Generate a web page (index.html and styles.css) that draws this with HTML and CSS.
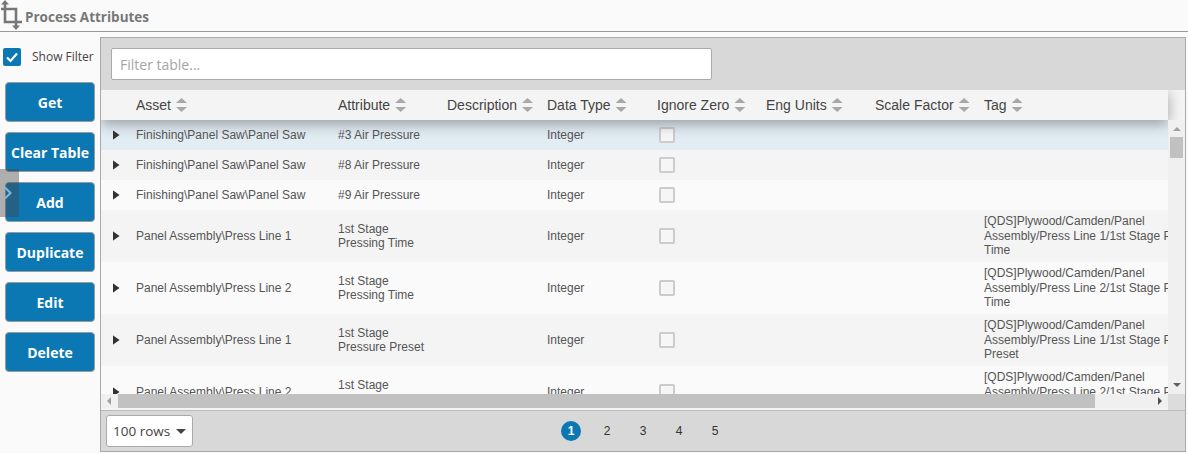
FILE: index.html
```html
<!DOCTYPE html>
<html lang="en">
<head>
<meta charset="utf-8">
<title>Process Attributes</title>
<link rel="stylesheet" href="styles.css">
</head>
<body>
<header class="topbar">
  <svg class="crop-icon" width="24" height="30" viewBox="0 0 24 30" aria-hidden="true">
    <path d="M5 3V22H22M1 9H16V27" fill="none" stroke="#777" stroke-width="2.600"/>
    <path d="M5 0L1 4.500H9ZM16 30L12 25.500H20Z" fill="#777"/>
  </svg>
  <h1 class="title">Process Attributes</h1>
</header>
<div class="page">
  <aside class="side">
    <label class="show-filter">
      <span class="check"><svg width="18" height="18" viewBox="0 0 18 18" aria-hidden="true"><path d="M4 9.500L7.500 13L14 5.500" fill="none" stroke="#fff" stroke-width="2.200"/></svg></span>
      <span>Show Filter</span>
    </label>
    <button class="btn">Get</button>
    <button class="btn">Clear Table</button>
    <button class="btn">Add</button>
    <button class="btn">Duplicate</button>
    <button class="btn">Edit</button>
    <button class="btn">Delete</button>
    <div class="drawer-tab"><svg width="8" height="14" viewBox="0 0 8 14" aria-hidden="true"><path d="M1 1.500L6.500 7L1 12.500" fill="none" stroke="#7db9dc" stroke-width="2"/></svg></div>
  </aside>
  <main class="panel">
    <div class="filter-bar"><input class="filter-input" type="text" placeholder="Filter table..."></div>
    <div class="head-wrap">
      <div class="head grid">
        <span></span>
        <span class="th">Asset<i class="sort"></i></span>
        <span class="th">Attribute<i class="sort"></i></span>
        <span class="th">Description<i class="sort"></i></span>
        <span class="th">Data Type<i class="sort"></i></span>
        <span class="th">Ignore Zero<i class="sort"></i></span>
        <span class="th">Eng Units<i class="sort"></i></span>
        <span class="th">Scale Factor<i class="sort"></i></span>
        <span class="th">Tag<i class="sort"></i></span>
      </div>
    </div>
    <div class="body-wrap">
      <div class="rows">
        <div class="row grid selected"><i class="tri"></i><span>Finishing\Panel Saw\Panel Saw</span><span>#3 Air Pressure</span><span></span><span>Integer</span><i class="box"></i><span></span><span></span><span></span></div>
        <div class="row grid alt"><i class="tri"></i><span>Finishing\Panel Saw\Panel Saw</span><span>#8 Air Pressure</span><span></span><span>Integer</span><i class="box"></i><span></span><span></span><span></span></div>
        <div class="row grid"><i class="tri"></i><span>Finishing\Panel Saw\Panel Saw</span><span>#9 Air Pressure</span><span></span><span>Integer</span><i class="box"></i><span></span><span></span><span></span></div>
        <div class="row grid tall alt"><i class="tri"></i><span>Panel Assembly\Press Line 1</span><span>1st Stage<br>Pressing Time</span><span></span><span>Integer</span><i class="box"></i><span></span><span></span><span>[QDS]Plywood/Camden/Panel<br>Assembly/Press Line 1/1st Stage Pressing<br>Time</span></div>
        <div class="row grid tall"><i class="tri"></i><span>Panel Assembly\Press Line 2</span><span>1st Stage<br>Pressing Time</span><span></span><span>Integer</span><i class="box"></i><span></span><span></span><span>[QDS]Plywood/Camden/Panel<br>Assembly/Press Line 2/1st Stage Pressing<br>Time</span></div>
        <div class="row grid tall alt"><i class="tri"></i><span>Panel Assembly\Press Line 1</span><span>1st Stage<br>Pressure Preset</span><span></span><span>Integer</span><i class="box"></i><span></span><span></span><span>[QDS]Plywood/Camden/Panel<br>Assembly/Press Line 1/1st Stage Pressure<br>Preset</span></div>
        <div class="row grid tall"><i class="tri"></i><span>Panel Assembly\Press Line 2</span><span>1st Stage<br>Pressure Preset</span><span></span><span>Integer</span><i class="box"></i><span></span><span></span><span>[QDS]Plywood/Camden/Panel<br>Assembly/Press Line 2/1st Stage Pressure<br>Preset</span></div>
      </div>
      <div class="vscroll">
        <i class="arr arr-up"></i>
        <i class="vthumb"></i>
        <i class="vspace"></i>
        <i class="arr arr-down"></i>
      </div>
    </div>
    <div class="hscroll-wrap">
      <div class="hscroll">
        <i class="arr arr-left"></i>
        <i class="hthumb"></i>
        <i class="arr arr-right"></i>
      </div>
      <div class="corner"></div>
    </div>
    <footer class="footer">
      <div class="rows-select"><span>100 rows</span><i class="caret"></i></div>
      <nav class="pager">
        <span class="page-no current">1</span>
        <span class="page-no">2</span>
        <span class="page-no">3</span>
        <span class="page-no">4</span>
        <span class="page-no">5</span>
      </nav>
      <span></span>
    </footer>
  </main>
</div>
</body>
</html>
```
FILE: styles.css
```css
* { box-sizing: border-box; }
html, body { margin: 0; padding: 0; }
html { overflow: hidden; }
body {
  width: 1188px;
  height: 453px;
  overflow: hidden;
  background: #fafafa;
  font-family: "Liberation Sans", Arial, sans-serif;
  position: relative;
}
.topbar {
  height: 32px;
  display: flex;
  align-items: flex-start;
  border-bottom: 1px solid #999;
  background: #fafafa;
}
.crop-icon { display: block; flex: none; }
.title {
  margin: 9px 0 0 1px;
  font: 700 13.500px/17px "Open Sans", sans-serif;
  color: #777;
  white-space: nowrap;
}
.page { display: flex; height: 421px; padding-top: 5px; }
.side {
  width: 100px;
  flex: none;
  padding: 11px 5px 0;
  display: flex;
  flex-direction: column;
  gap: 10px;
}
.show-filter {
  display: flex;
  align-items: center;
  height: 18px;
  margin: 0 0 6px -2px;
  font: 400 12px/18px "Open Sans", sans-serif;
  color: #444;
  white-space: nowrap;
}
.check {
  width: 18px;
  height: 18px;
  margin-right: 11px;
  border-radius: 2px;
  background: #0b78b3;
  flex: none;
}
.check svg { display: block; }
.btn {
  width: 90px;
  height: 40px;
  flex: none;
  padding: 2px 0 0;
  border: 1px solid #9a9a9a;
  border-radius: 4px;
  background: #0b78b3;
  color: #fff;
  font: 700 14px/36px "Open Sans", sans-serif;
  text-align: center;
}
.drawer-tab {
  position: absolute;
  left: 0;
  top: 169px;
  width: 19px;
  height: 48px;
  padding-left: 4px;
  display: flex;
  align-items: center;
  background: rgba(70, 70, 70, 0.42);
}
.panel {
  width: 1086px;
  height: 415px;
  flex: none;
  border: 1px solid #aaa;
  background: #d8d8d8;
  display: flex;
  flex-direction: column;
}
.filter-bar { height: 52px; flex: none; padding: 10px 0 0 10px; }
.filter-input {
  display: block;
  width: 601px;
  height: 32px;
  padding: 0 8px;
  border: 1px solid #aaa;
  border-radius: 2px;
  background: #fff;
  font: 400 14px "Open Sans", sans-serif;
  color: #444;
  outline: none;
}
.filter-input::placeholder { color: #a5a5a5; opacity: 1; }
.grid {
  display: grid;
  grid-template-columns: 25px 202px 109px 100px 110px 109px 109px 109px minmax(0, 1fr);
  align-items: center;
}
.grid > * { padding-left: 10px; }
.head-wrap { height: 30px; flex: none; background: #f4f4f4; }
.head {
  position: relative;
  z-index: 1;
  width: 1067px;
  height: 30px;
  background: #f4f4f4;
  box-shadow: 0 4px 14px rgba(60, 60, 60, 0.45);
  clip-path: inset(0 -16px -20px 0);
}
.th {
  display: flex;
  align-items: center;
  font-size: 14px;
  line-height: 30px;
  color: #444;
  white-space: nowrap;
}
.sort {
  position: relative;
  display: block;
  width: 11px;
  height: 14px;
  margin-left: 5px;
  flex: none;
}
.sort::before,
.sort::after {
  content: "";
  position: absolute;
  left: 0;
  width: 11px;
  height: 5px;
  background: #a8a8a8;
}
.sort::before { top: 0; clip-path: polygon(50% 0, 100% 100%, 0 100%); }
.sort::after { bottom: 0; clip-path: polygon(0 0, 100% 0, 50% 100%); }
.body-wrap { height: 274px; flex: none; display: flex; }
.rows { width: 1067px; height: 274px; flex: none; overflow: hidden; background: #fafafa; }
.row {
  height: 30px;
  background: #fafafa;
  font-size: 12px;
  line-height: 14.500px;
  color: #555;
  white-space: nowrap;
  overflow: hidden;
}
.row.alt { background: #f4f4f4; }
.row.selected { background: #e2ecf3; }
.row.tall { height: 52px; }
.tri {
  display: block;
  width: 7px;
  height: 10px;
  padding: 0;
  margin-left: 11.500px;
  background: #333;
  clip-path: polygon(0 0, 100% 50%, 0 100%);
}
.box {
  display: block;
  width: 16px;
  height: 16px;
  padding: 0;
  margin-left: 12px;
  border: 2px solid #ccc;
  border-radius: 2px;
  background: #f6f6f6;
}
.vscroll {
  position: relative;
  z-index: 2;
  width: 17px;
  flex: none;
  display: flex;
  flex-direction: column;
  align-items: center;
  padding: 7px 0 7px;
  background: #f0f0f0;
}
.vthumb { display: block; width: 13px; height: 21px; margin-top: 6px; background: #c1c1c1; }
.vspace { flex: 1; }
.arr { display: block; width: 0; height: 0; border-style: solid; border-color: transparent; flex: none; }
.arr-up { border-width: 0 4px 4px; border-bottom-color: #a0a0a0; }
.arr-down { border-width: 4px 4px 0; border-top-color: #606060; }
.arr-left { border-width: 4px 4px 4px 0; border-right-color: #a0a0a0; }
.arr-right { border-width: 4px 0 4px 4px; border-left-color: #505050; }
.hscroll-wrap { height: 16px; flex: none; display: flex; }
.hscroll {
  width: 1067px;
  height: 16px;
  flex: none;
  display: flex;
  align-items: center;
  padding: 0 6px;
  border-bottom: 2px solid #f4f4f4;
  background: #f0f0f0;
}
.hthumb { display: block; width: 977px; height: 14px; margin: 0 auto 0 7px; background: #c1c1c1; }
.corner { flex: 1; height: 16px; background: #dcdcdc; }
.footer {
  flex: 1;
  display: grid;
  grid-template-columns: 1fr auto 1fr;
  align-items: center;
  padding-left: 5px;
  border-top: 1px solid #bbb;
}
.rows-select {
  width: 87px;
  height: 32px;
  display: flex;
  align-items: center;
  padding-left: 6px;
  border: 1px solid #aaa;
  border-radius: 3px;
  background: #fff;
  font: 400 13.500px "Open Sans", sans-serif;
  color: #444;
}
.caret {
  display: block;
  margin-left: 6px;
  border-style: solid;
  border-width: 5px 5.500px 0;
  border-color: #444 transparent transparent;
}
.pager { display: flex; margin-left: -5px; }
.page-no {
  width: 36px;
  height: 20px;
  display: flex;
  align-items: center;
  justify-content: center;
  font-size: 12px;
  color: #333;
}
.page-no.current { position: relative; z-index: 0; color: #fff; font-weight: 700; }
.page-no.current::before {
  content: "";
  position: absolute;
  z-index: -1;
  left: 8px;
  top: 0;
  width: 20px;
  height: 20px;
  border-radius: 50%;
  background: #0b78b3;
}
```
